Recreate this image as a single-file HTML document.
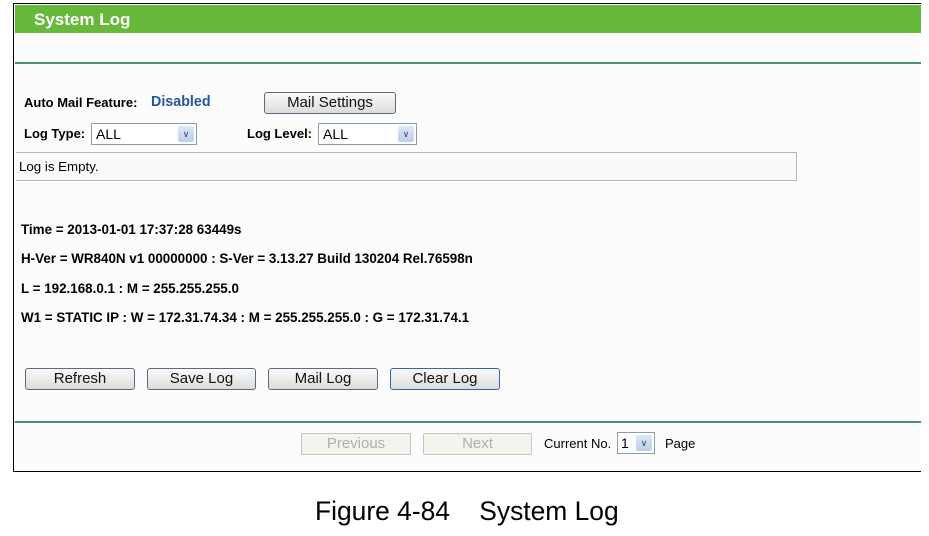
<!DOCTYPE html>
<html><head><style>
*{margin:0;padding:0;box-sizing:border-box}
body{width:929px;height:536px;background:#fff;font-family:"Liberation Sans",Arial,sans-serif;position:relative;overflow:hidden}
.a{position:absolute}
.frame{left:13px;top:3px;width:908px;height:469px;border:1px solid #000;border-right:none;background:#fcfcfc}
.hdr{left:15px;top:5px;width:906px;height:28px;background:#66b93a;color:#fff;font-weight:bold;font-size:17px;padding:5px 0 0 19px}
.gl{left:15px;width:906px;height:2px;background:#4d8f6b}
.b{font-size:13px;font-weight:bold;color:#000}
.btn{border:1px solid #5a6a80;border-radius:3px;background:linear-gradient(#fafafa,#dcdcdc);font-size:15px;text-align:center;color:#111;height:22px;line-height:20px}
.sel{border:1px solid #8a9bb0;background:#fff;height:22px;font-size:14px;padding:2px 4px}
.arr{position:absolute;right:2px;top:2px;width:16px;height:16px;background:linear-gradient(#dfe8f8,#b9cdee);border-radius:2px;font-size:9px;color:#445;text-align:center;line-height:16px}
.t{font-size:13.4px;font-weight:bold}
.dis{border:1px solid #c8c8c0;background:#f4f4ee;color:#b0b0a8;font-size:15px;text-align:center;height:22px;line-height:20px;border-radius:2px}
</style></head><body>
<div class="a frame"></div>
<div class="a hdr">System Log</div>
<div class="a gl" style="top:62px"></div>
<div class="a b" style="left:24px;top:95px">Auto Mail Feature:</div>
<div class="a" style="left:151px;top:94px;font-size:14.3px;font-weight:bold;color:#2456a0">Disabled</div>
<div class="a btn" style="left:264px;top:92px;width:132px">Mail Settings</div>
<div class="a b" style="left:24px;top:126px">Log Type:</div>
<div class="a sel" style="left:91px;top:123px;width:106px">ALL<div class="arr">&#8744;</div></div>
<div class="a b" style="left:247px;top:126px">Log Level:</div>
<div class="a sel" style="left:318px;top:123px;width:99px">ALL<div class="arr">&#8744;</div></div>
<div class="a" style="left:16px;top:152px;width:781px;height:29px;border:1px solid #b8b8b8;border-left:none;background:#fafafa;font-size:13.3px;padding:6px 0 0 3px">Log is Empty.</div>
<div class="a t" style="left:21px;top:222px">Time = 2013-01-01 17:37:28 63449s</div>
<div class="a t" style="left:21px;top:251px">H-Ver = WR840N v1 00000000 : S-Ver = 3.13.27 Build 130204 Rel.76598n</div>
<div class="a t" style="left:21px;top:281px">L = 192.168.0.1 : M = 255.255.255.0</div>
<div class="a t" style="left:21px;top:310px">W1 = STATIC IP : W = 172.31.74.34 : M = 255.255.255.0 : G = 172.31.74.1</div>
<div class="a btn" style="left:25px;top:368px;width:110px">Refresh</div>
<div class="a btn" style="left:147px;top:368px;width:109px">Save Log</div>
<div class="a btn" style="left:268px;top:368px;width:110px">Mail Log</div>
<div class="a btn" style="left:390px;top:368px;width:110px;border-color:#3366aa">Clear Log</div>
<div class="a gl" style="top:421px"></div>
<div class="a dis" style="left:301px;top:433px;width:110px">Previous</div>
<div class="a dis" style="left:423px;top:433px;width:109px">Next</div>
<div class="a" style="left:544px;top:436px;font-size:13px">Current No.</div>
<div class="a sel" style="left:617px;top:432px;width:38px;padding:2px 3px">1<div class="arr">&#8744;</div></div>
<div class="a" style="left:665px;top:436px;font-size:13px">Page</div>
<div class="a" style="left:315px;top:496px;font-size:26.4px;color:#000">Figure 4-84&nbsp;&nbsp;&nbsp; System Log</div>
</body></html>
